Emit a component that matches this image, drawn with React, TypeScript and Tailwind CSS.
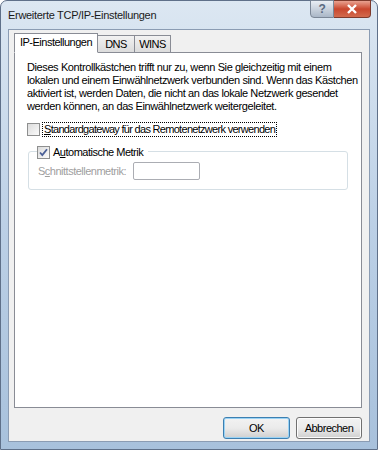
import { useState } from "react";

const font = { fontFamily: '"Liberation Sans", Arial, sans-serif' };

function Check({ checked, disabled }: { checked: boolean; disabled?: boolean }) {
    return (
        <span
            className={
                "inline-flex w-[13px] h-[13px] shrink-0 items-center justify-center border " +
                (disabled ? "border-[#b5b5b5] bg-[#f4f4f4]" : "border-[#8e8f8f] bg-gradient-to-br from-[#dcdcdc] to-[#fbfbfb]")
            }
        >
            {checked && (
                <svg width="11" height="11" viewBox="0 0 11 11">
                    <path d="M2 5.5 L4.3 8 L9 2.2" fill="none" stroke="#4a5f97" strokeWidth="1.8" />
                </svg>
            )}
        </span>
    );
}

export default function App() {
    const [tab, setTab] = useState("ip");
    const [gateway, setGateway] = useState(false);
    const [auto, setAuto] = useState(true);

    const tabs = [
        { id: "ip", label: "IP-Einstellungen", w: "w-[84px]" },
        { id: "dns", label: "DNS", w: "w-[38px]" },
        { id: "wins", label: "WINS", w: "w-[37px]" },
    ];

    return (
        <div
            style={font}
            className="w-[378px] h-[450px] flex flex-col rounded-t-[7px] border border-[#5f7089] bg-gradient-to-b from-[#dce7f2] via-[#bcd0e6] to-[#a8c1dc] text-[11px] tracking-[-0.5px] text-black select-none"
        >
            {/* title bar */}
            <div className="h-[28px] flex items-start justify-between">
                <div className="pl-[7px] pt-[6px] text-[11px] tracking-[-0.3px] text-[#1a1a1a]">Erweiterte TCP/IP-Einstellungen</div>
                <div className="flex mr-[6px] -mt-px">
                    <button className="w-[24px] h-[18px] flex items-center justify-center border border-[#7b8797] rounded-bl-[4px] bg-gradient-to-b from-[#e9eef4] to-[#aab7c7] text-[12px] font-bold text-[#5a6a80]">
                        ?
                    </button>
                    <button className="w-[37px] h-[18px] flex items-center justify-center border border-l-0 border-[#7e3a2c] rounded-br-[4px] bg-gradient-to-b from-[#e8a190] via-[#c9462d] to-[#d26a4d]">
                        <svg width="12" height="10" viewBox="0 0 12 10">
                            <path d="M2 1 L10 9 M10 1 L2 9" stroke="#fff" strokeWidth="2.4" />
                        </svg>
                    </button>
                </div>
            </div>

            {/* client area */}
            <div className="flex-1 mx-[7px] mb-[7px] border border-[#8b9cb3] bg-[#f0f0f0] flex flex-col pl-[5px] pr-[7px] pt-[3px]">
                <div className="flex items-end h-[19px] relative z-10">
                    {tabs.map((t) => {
                        const sel = tab === t.id;
                        return (
                            <button
                                key={t.id}
                                onClick={() => setTab(t.id)}
                                className={
                                    t.w +
                                    " border border-[#898c95] text-center " +
                                    (sel
                                        ? "h-[20px] -mb-px bg-white border-b-white pb-[2px]"
                                        : "h-[17px] -ml-px bg-gradient-to-b from-[#f2f2f2] to-[#dcdcdc] border-b-0")
                                }
                            >
                                {t.label}
                            </button>
                        );
                    })}
                </div>
                <div className="h-[356px] border border-[#898c95] bg-white pl-[12px] pr-[10px] pt-[8px]">
                    {tab === "ip" && (
                        <>
                            <p className="leading-[13px] whitespace-nowrap tracking-[-0.4px]">
                                Dieses Kontrollkästchen trifft nur zu, wenn Sie gleichzeitig mit einem
                                <br />
                                lokalen und einem Einwählnetzwerk verbunden sind. Wenn das Kästchen
                                <br />
                                aktiviert ist, werden Daten, die nicht an das lokale Netzwerk gesendet
                                <br />
                                werden können, an das Einwählnetzwerk weitergeleitet.
                            </p>
                            <label className="mt-[9px] flex items-center gap-[2px]" onClick={() => setGateway(!gateway)}>
                                <Check checked={gateway} />
                                <span className="border border-dotted border-black px-px leading-[13px] tracking-[-0.7px]">
                                    <span className="underline">S</span>tandardgateway für das Remotenetzwerk verwenden
                                </span>
                            </label>
                            <div className="relative mt-[14px] ml-px mr-[3px] h-[39px] border border-[#d5dfe5] rounded-[3px]">
                                <label
                                    className="absolute -top-[8px] left-[8px] bg-white pr-[5px] flex items-center gap-[3px]"
                                    onClick={() => setAuto(!auto)}
                                >
                                    <Check checked={auto} />
                                    <span>
                                        A<span className="underline">u</span>tomatische Metrik
                                    </span>
                                </label>
                                <div className="flex items-center pl-[9px] pt-[10px] gap-[7px] text-[#a0a0a0]">
                                    <span>
                                        S<span className="underline">c</span>hnittstellenmetrik:
                                    </span>
                                    <div className="w-[67px] h-[18px] border border-[#abadb3] rounded-[2px] bg-white" />
                                </div>
                            </div>
                        </>
                    )}
                </div>
                <div className="flex justify-end gap-[6px] mt-[9px]">
                    <button className="w-[67px] h-[22px] border border-[#3c7fb1] rounded-[3px] bg-gradient-to-b from-[#f2f2f2] via-[#ebebeb] to-[#cfcfcf] shadow-[inset_0_0_0_1px_#9ad3f5]">
                        OK
                    </button>
                    <button className="w-[66px] h-[22px] border border-[#707070] rounded-[3px] bg-gradient-to-b from-[#f2f2f2] via-[#ebebeb] to-[#cfcfcf] shadow-[inset_0_0_0_1px_#fcfcfc]">
                        Abbrechen
                    </button>
                </div>
            </div>
        </div>
    );
}
